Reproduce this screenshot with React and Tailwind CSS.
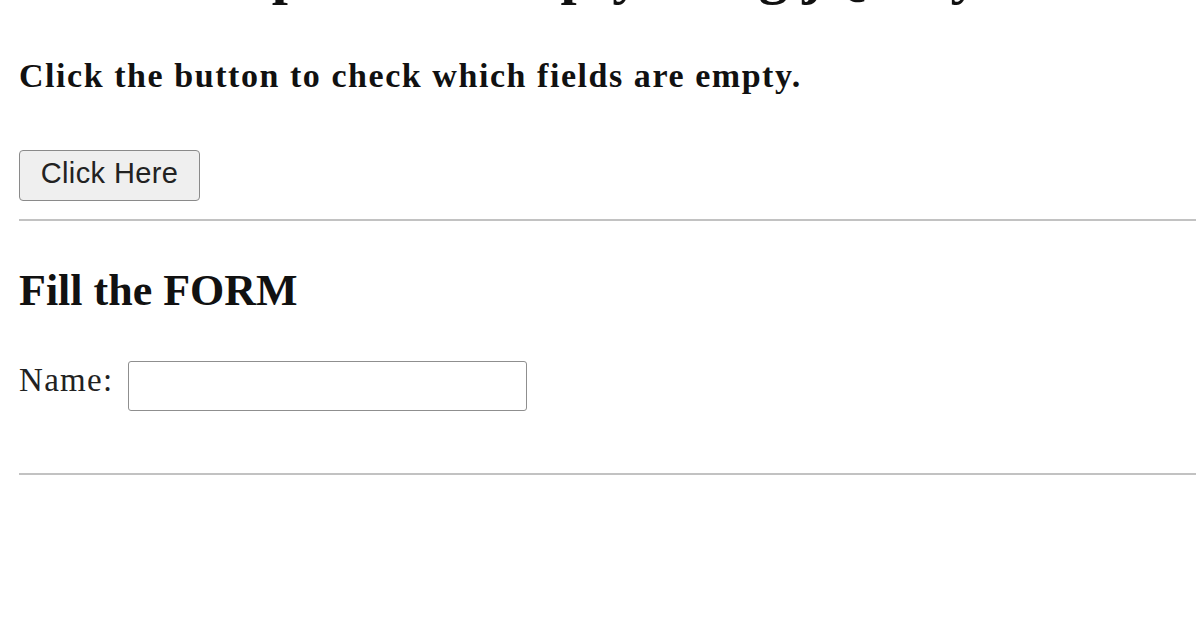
import React from "react";

const App = () => {
  return (
    <div className="h-[628px] w-full overflow-hidden bg-white pl-[19px] font-['Liberation_Serif',serif] text-[#111]">
      {/* page title, mostly scrolled out of view */}
      <h1 className="mt-[-55px] ml-[-18px] whitespace-nowrap text-[58px] font-bold leading-[58px]">
        Check if inputs are empty using jQuery
      </h1>

      <p className="mt-[54px] whitespace-nowrap text-[34px] font-bold leading-[38px] tracking-[1.55px]">
        Click the button to check which fields are empty.
      </p>

      <button className="mt-[55px] flex h-[51px] w-[181px] items-center justify-center rounded-[4px] border border-[#8a8a8a] bg-[#efefef] pb-[3px] font-['Liberation_Sans',sans-serif] text-[29px] tracking-[0.4px] text-[#222]">
        Click Here
      </button>

      <div className="mt-[18px] h-[2px] bg-[#c2c2c2]" />

      <h2 className="mt-[45px] whitespace-nowrap text-[44px] font-bold leading-[50px]">
        Fill the FORM
      </h2>

      {/* form */}
      <div className="mt-[45px] flex items-start gap-[15px]">
        <label className="text-[33px] leading-[38px] tracking-[1.3px] text-[#222]">Name:</label>
        <input
          type="text"
          className="h-[50px] w-[399px] rounded-[3px] border border-[#8f8f8f] bg-white outline-none"
        />
      </div>

      <div className="mt-[62px] h-[2px] bg-[#c2c2c2]" />
    </div>
  );
};

export default App;
